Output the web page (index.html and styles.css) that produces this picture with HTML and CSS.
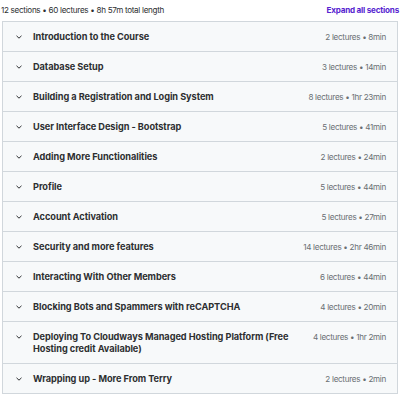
FILE: index.html
```html
<!DOCTYPE html>
<html lang="en">
<head>
    <meta charset="UTF-8">
    <title>Course content</title>
    <link rel="stylesheet" href="styles.css">
</head>
<body>
<div id="curriculum">
    <div class="curriculum-top">
        <span class="summary">12 sections • 60 lectures • 8h 57m total length</span>
        <button class="expand-all">Expand all sections</button>
    </div>
    <div class="section-list">
        <div class="section"><span class="chevron"><svg width="8" height="8" viewBox="0 0 8 8"><path d="M1.5 2.8 4 5.2 6.5 2.8" fill="none" stroke="#2d2f31" stroke-width="1"/></svg></span><span class="section-title">Introduction to the Course</span><span class="section-meta">2 lectures • 8min</span></div>
        <div class="section"><span class="chevron"><svg width="8" height="8" viewBox="0 0 8 8"><path d="M1.5 2.8 4 5.2 6.5 2.8" fill="none" stroke="#2d2f31" stroke-width="1"/></svg></span><span class="section-title">Database Setup</span><span class="section-meta">3 lectures • 14min</span></div>
        <div class="section"><span class="chevron"><svg width="8" height="8" viewBox="0 0 8 8"><path d="M1.5 2.8 4 5.2 6.5 2.8" fill="none" stroke="#2d2f31" stroke-width="1"/></svg></span><span class="section-title">Building a Registration and Login System</span><span class="section-meta">8 lectures • 1hr 23min</span></div>
        <div class="section"><span class="chevron"><svg width="8" height="8" viewBox="0 0 8 8"><path d="M1.5 2.8 4 5.2 6.5 2.8" fill="none" stroke="#2d2f31" stroke-width="1"/></svg></span><span class="section-title">User Interface Design - Bootstrap</span><span class="section-meta">5 lectures • 41min</span></div>
        <div class="section"><span class="chevron"><svg width="8" height="8" viewBox="0 0 8 8"><path d="M1.5 2.8 4 5.2 6.5 2.8" fill="none" stroke="#2d2f31" stroke-width="1"/></svg></span><span class="section-title">Adding More Functionalities</span><span class="section-meta">2 lectures • 24min</span></div>
        <div class="section"><span class="chevron"><svg width="8" height="8" viewBox="0 0 8 8"><path d="M1.5 2.8 4 5.2 6.5 2.8" fill="none" stroke="#2d2f31" stroke-width="1"/></svg></span><span class="section-title">Profile</span><span class="section-meta">5 lectures • 44min</span></div>
        <div class="section"><span class="chevron"><svg width="8" height="8" viewBox="0 0 8 8"><path d="M1.5 2.8 4 5.2 6.5 2.8" fill="none" stroke="#2d2f31" stroke-width="1"/></svg></span><span class="section-title">Account Activation</span><span class="section-meta">5 lectures • 27min</span></div>
        <div class="section"><span class="chevron"><svg width="8" height="8" viewBox="0 0 8 8"><path d="M1.5 2.8 4 5.2 6.5 2.8" fill="none" stroke="#2d2f31" stroke-width="1"/></svg></span><span class="section-title">Security and more features</span><span class="section-meta">14 lectures • 2hr 46min</span></div>
        <div class="section"><span class="chevron"><svg width="8" height="8" viewBox="0 0 8 8"><path d="M1.5 2.8 4 5.2 6.5 2.8" fill="none" stroke="#2d2f31" stroke-width="1"/></svg></span><span class="section-title">Interacting With Other Members</span><span class="section-meta">6 lectures • 44min</span></div>
        <div class="section"><span class="chevron"><svg width="8" height="8" viewBox="0 0 8 8"><path d="M1.5 2.8 4 5.2 6.5 2.8" fill="none" stroke="#2d2f31" stroke-width="1"/></svg></span><span class="section-title">Blocking Bots and Spammers with reCAPTCHA</span><span class="section-meta">4 lectures • 20min</span></div>
        <div class="section"><span class="chevron"><svg width="8" height="8" viewBox="0 0 8 8"><path d="M1.5 2.8 4 5.2 6.5 2.8" fill="none" stroke="#2d2f31" stroke-width="1"/></svg></span><span class="section-title">Deploying To Cloudways Managed Hosting Platform (Free Hosting credit Available)</span><span class="section-meta">4 lectures • 1hr 2min</span></div>
        <div class="section"><span class="chevron"><svg width="8" height="8" viewBox="0 0 8 8"><path d="M1.5 2.8 4 5.2 6.5 2.8" fill="none" stroke="#2d2f31" stroke-width="1"/></svg></span><span class="section-title">Wrapping up - More From Terry</span><span class="section-meta">2 lectures • 2min</span></div>
    </div>
</div>
</body>
</html>
```

FILE: styles.css
```css
body {
    margin: 0;
    padding: 0;
    background: #fff;
    color: #2d2f31;
    font-family: Inter, "Liberation Sans", sans-serif;
}
#curriculum {
    padding: 0 2px 2px 2px;
}
.curriculum-top {
    display: flex;
    justify-content: space-between;
    align-items: center;
    height: 21px;
    margin-left: -1px;
    padding-bottom: 1px;
    box-sizing: border-box;
}
.summary {
    font-size: 8.1px;
    color: #2d2f31;
    letter-spacing: -0.3px;
}
.expand-all {
    border: none;
    background: none;
    padding: 0;
    margin-right: -1px;
    font-family: inherit;
    font-size: 8.1px;
    font-weight: 700;
    color: #5624d0;
    letter-spacing: -0.2px;
}
.section-list {
    border: 1px solid #d1d7dc;
    border-bottom: none;
}
.section {
    display: flex;
    align-items: flex-start;
    padding: 9px 11px 8px 12px;
    background: #f7f9fa;
    border-bottom: 1px solid #d1d7dc;
}
.chevron {
    width: 8px;
    height: 12px;
    display: flex;
    align-items: center;
    margin-right: 10px;
    flex-shrink: 0;
}
.section-title {
    flex: 1;
    font-size: 9.2px;
    font-weight: 700;
    line-height: 12px;
    letter-spacing: -0.05px;
    padding-right: 14px;
}
.section-meta {
    font-size: 8.1px;
    line-height: 12px;
    color: #6a6f73;
    white-space: nowrap;
    letter-spacing: -0.3px;
}
```
